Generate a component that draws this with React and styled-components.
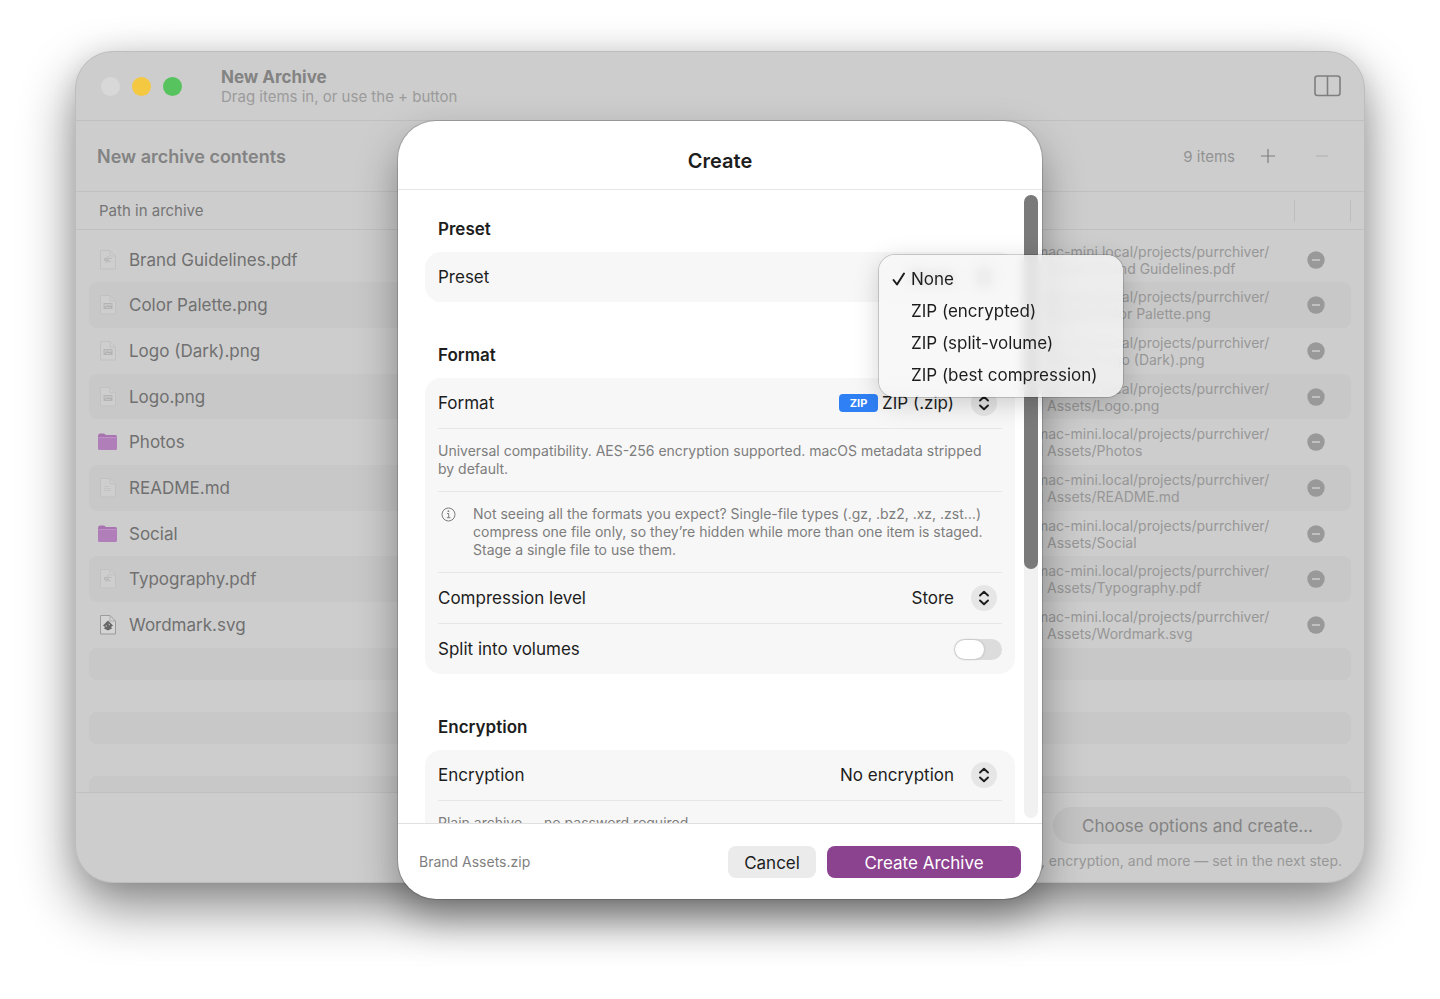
import React, { useState } from 'react';
import styled, { createGlobalStyle } from 'styled-components';

const GlobalStyle = createGlobalStyle`
    * {
        box-sizing: border-box;
    }
    body {
        margin: 0;
        background: #fff;
        font-family: Inter, "Liberation Sans", sans-serif;
        font-size: 17px;
        color: #1d1d1d;
    }
    button, select, input {
        font: inherit;
        color: inherit;
        margin: 0;
    }
    h1, h2, h3, p {
        margin: 0;
    }
`;

const Page = styled.main`
    display: flex;
    min-height: 100vh;
    padding: 51px 75px 116px;
    overflow: hidden;
`;

const Window = styled.section`
    position: relative;
    display: flex;
    flex-direction: column;
    flex: 1;
    min-width: 0;
    border: 1px solid #bdbdbd;
    border-radius: 38px;
    background: #cdcdcd;
    box-shadow: 0 24px 54px rgba(0, 0, 0, 0.48), 0 0 26px rgba(0, 0, 0, 0.08);
`;

const TitleBar = styled.header`
    display: flex;
    align-items: center;
    height: 69px;
    padding: 0 23px 0 25px;
    border-bottom: 1px solid #c0c0c0;
`;

const Lights = styled.div`
    display: flex;
    gap: 12px;
    margin-right: 39px;
`;

const Light = styled.button`
    width: 19px;
    height: 19px;
    padding: 0;
    border: 0;
    border-radius: 50%;
    background: ${({ $color }) => $color};
`;

const Titles = styled.div`
    flex: 1;
    padding-top: 2px;
`;

const WindowTitle = styled.h1`
    font-size: 17px;
    line-height: 20px;
    font-weight: 700;
    color: #838383;
`;

const Subtitle = styled.p`
    font-size: 15px;
    line-height: 20px;
    color: #9b9b9b;
`;

const PlainButton = styled.button`
    display: flex;
    padding: 0;
    border: 0;
    background: none;
    color: ${({ $color }) => $color || '#7f7f7f'};
`;

const ContentsBar = styled.div`
    display: flex;
    align-items: center;
    height: 71px;
    padding: 0 35px 0 21px;
    border-bottom: 1px solid #c0c0c0;
`;

const ContentsTitle = styled.h2`
    flex: 1;
    font-size: 18px;
    font-weight: 600;
    color: #838383;
`;

const Count = styled.span`
    margin-right: 26px;
    font-size: 15px;
    color: #929292;
`;

const ContentsActions = styled.div`
    display: flex;
    gap: 40px;
`;

const TableArea = styled.div`
    flex: 1 1 0;
    min-height: 0;
    overflow: hidden;
`;

const Table = styled.table`
    display: block;
`;

const TableHead = styled.thead`
    display: block;
    padding: 0 13px;
    border-bottom: 1px solid #c0c0c0;
`;

const HeadRow = styled.tr`
    display: flex;
    align-items: center;
    height: 37px;
`;

const HeadCell = styled.th`
    flex: ${({ $width }) => ($width ? `0 0 ${$width}` : 1)};
    height: ${({ $divided }) => ($divided ? '22px' : 'auto')};
    padding: 0 10px;
    border-right: ${({ $divided }) => ($divided ? '1px solid #bdbdbd' : 0)};
    font-size: 15px;
    font-weight: 400;
    text-align: left;
    color: #757575;
`;

const TableBody = styled.tbody`
    display: block;
    padding: 7px 13px 0;
`;

const Row = styled.tr`
    display: flex;
    align-items: center;
    height: 46px;
    border-radius: 8px;

    &:nth-child(3n + 1) {
        height: 45px;
    }
    &:nth-child(even) {
        background: #c8c8c8;
    }
`;

const NameCell = styled.td`
    display: flex;
    align-items: center;
    flex: 1;
    gap: 11px;
    padding: 0 8px;
    color: #707070;
`;

const SourceCell = styled.td`
    flex: 0 0 291px;
    padding: 0;
    font-size: 14px;
    line-height: 17px;
    color: #979797;
`;

const ActionCell = styled.td`
    display: flex;
    flex: 0 0 56px;
    padding: 0 0 0 12px;
`;

const Filler = styled.div`
    margin: 0 13px;
`;

const FillerRow = styled.div`
    height: 32px;
    border-radius: 8px;

    &:nth-child(odd) {
        background: #c8c8c8;
    }
`;

const WindowFooter = styled.footer`
    display: flex;
    flex-direction: column;
    align-items: flex-end;
    gap: 8px;
    height: 90px;
    padding: 14px 22px 0;
    border-top: 1px solid #c0c0c0;
`;

const OptionsButton = styled.button`
    height: 37px;
    padding: 1px 29px 0;
    border: 0;
    border-radius: 19px;
    background: #c4c4c4;
    color: #838383;
`;

const Hint = styled.p`
    font-size: 14px;
    line-height: 18px;
    color: #989898;
`;

const Overlay = styled.div`
    position: absolute;
    inset: 0;
    display: flex;
    justify-content: center;
    align-items: flex-start;
    padding-top: 69px;
`;

const Dialog = styled.div`
    position: relative;
    display: flex;
    flex-direction: column;
    width: 644px;
    height: calc(100vh - 221px);
    border-radius: 38px;
    background: #fff;
    box-shadow: 0 0 0 1px rgba(0, 0, 0, 0.16), 0 20px 42px rgba(0, 0, 0, 0.36);
`;

const DialogHeader = styled.header`
    display: flex;
    align-items: center;
    justify-content: center;
    height: 69px;
    padding-top: 12px;
    border-bottom: 1px solid #e6e6e6;
`;

const DialogTitle = styled.h2`
    font-size: 20px;
    font-weight: 600;
`;

const DialogBody = styled.div`
    display: flex;
    flex: 1;
    gap: 9px;
    min-height: 0;
    padding: 0 4px 0 27px;
`;

const Form = styled.form`
    display: flex;
    flex: 1;
    flex-direction: column;
    gap: 42px;
    padding-top: 28px;
    overflow-y: auto;
    scrollbar-width: none;
`;

const ScrollTrack = styled.div`
    width: 14px;
    margin: 5px 0;
    border-radius: 7px;
    background: #f1f1f1;
`;

const ScrollThumb = styled.div`
    height: 60%;
    border-radius: 7px;
    background: #7a7a7a;
`;

const SectionTitle = styled.h3`
    margin-bottom: 12px;
    padding: 0 13px;
    font-size: 17px;
    line-height: 22px;
    font-weight: 600;
`;

const Card = styled.div`
    padding: 0 13px;
    border-radius: 16px;
    background: #f7f7f7;
`;

const CardRow = styled.div`
    display: flex;
    align-items: center;
    justify-content: space-between;
    min-height: 51px;
    border-bottom: 1px solid #e6e6e6;

    &:last-child {
        min-height: 50px;
        border-bottom: 0;
    }
`;

const Note = styled(CardRow)`
    align-items: flex-start;
    justify-content: flex-start;
    padding: 13px 14px 13px ${({ $icon }) => ($icon ? '3px' : 0)};
    gap: 17px;
    font-size: 14px;
    line-height: 18px;
    color: #7d7d7d;

    svg {
        flex: none;
        margin-top: 2px;
    }
`;

const Picker = styled.div`
    display: flex;
    align-items: center;
    gap: 4px;
    padding-right: 5px;
`;

const Select = styled.select`
    appearance: none;
    field-sizing: content;
    height: 26px;
    padding: 0;
    border: 0;
    background: none;
`;

const Stepper = styled.span`
    display: flex;
    align-items: center;
    justify-content: center;
    width: 26px;
    height: 26px;
    margin-left: 13px;
    border-radius: 50%;
    background: #e6e6e6;
    pointer-events: none;
`;

const Badge = styled.span`
    width: 39px;
    border-radius: 4px;
    background: #2f80f5;
    color: #fff;
    font-size: 11px;
    line-height: 18px;
    font-weight: 700;
    text-align: center;
`;

const Toggle = styled.input`
    appearance: none;
    display: flex;
    align-items: center;
    width: 48px;
    height: 21px;
    padding: 0 1px;
    border-radius: 11px;
    background: #dcdcdc;

    &::before {
        content: '';
        width: 29px;
        height: 19px;
        border-radius: 10px;
        background: #fff;
        box-shadow: 0 0 3px rgba(0, 0, 0, 0.2);
    }
    &:checked {
        justify-content: flex-end;
        background: #8b428f;
    }
`;

const DialogFooter = styled.footer`
    display: flex;
    align-items: center;
    gap: 11px;
    height: 76px;
    padding: 0 21px;
    border-top: 1px solid #e0e0e0;
`;

const FileName = styled.span`
    flex: 1;
    font-size: 14px;
    color: #7f7f7f;
`;

const Button = styled.button`
    width: ${({ $primary }) => ($primary ? '194px' : '88px')};
    height: 32px;
    padding: 2px 0 0;
    border: 0;
    border-radius: 8px;
    background: ${({ $primary }) => ($primary ? '#8b428f' : '#ebebeb')};
    color: ${({ $primary }) => ($primary ? '#fff' : '#1d1d1d')};
`;

const Menu = styled.div`
    position: absolute;
    top: 134px;
    left: 481px;
    width: 244px;
    padding: 8px 0 6px;
    border-radius: 16px;
    background: rgba(246, 246, 246, 0.8);
    backdrop-filter: blur(6px);
    box-shadow: 0 0 0 1px rgba(0, 0, 0, 0.16), 0 6px 26px rgba(0, 0, 0, 0.18);
`;

const MenuItem = styled.button`
    display: flex;
    align-items: center;
    width: 100%;
    height: 32px;
    padding: 0 13px;
    border: 0;
    background: none;
    white-space: nowrap;
`;

const CheckSlot = styled.span`
    display: flex;
    width: 19px;
`;

const files = [
    { name: 'Brand Guidelines.pdf', kind: 'pdf' },
    { name: 'Color Palette.png', kind: 'image' },
    { name: 'Logo (Dark).png', kind: 'image' },
    { name: 'Logo.png', kind: 'image' },
    { name: 'Photos', kind: 'folder' },
    { name: 'README.md', kind: 'text' },
    { name: 'Social', kind: 'folder' },
    { name: 'Typography.pdf', kind: 'pdf' },
    { name: 'Wordmark.svg', kind: 'vector' },
];

const presets = ['None', 'ZIP (encrypted)', 'ZIP (split-volume)', 'ZIP (best compression)'];

const FileIcon = ({ kind }) => {
    if (kind === 'folder') {
        return (
            <svg width="21" height="20" viewBox="0 0 21 20">
                <path d="M1 4Q1 1.500 3 1.500h4l2 1.500h9.500Q20 3 20 5v2H1z" fill="#a874b0" />
                <rect x="1" y="5" width="19" height="13" rx="1.500" fill="#b07fba" />
                <path d="M1.500 5.500h18" stroke="#c08fc8" strokeWidth="1" />
            </svg>
        );
    }
    const vector = kind === 'vector';
    return (
        <svg width="21" height="20" viewBox="0 0 21 20" fill="none">
            <path
                d="M3.500 .5h9.500l5.500 5.500v13h-15z"
                fill={vector ? '#d4d4d4' : '#cecece'}
                stroke={vector ? '#9c9c9c' : '#c1c1c1'}
                strokeLinejoin="round"
            />
            <path d="M13 .5v5.500h5.500" stroke={vector ? '#aaa' : '#c1c1c1'} />
            {vector && (
                <>
                    <path d="M11 5.500l5 5-2 1.500 1 1.500-4 2-4-2 1-1.500-2-1.500z" fill="#666" />
                    <path d="M8.500 11H10M11.500 9l1.500 1" stroke="#c8c8c8" />
                </>
            )}
            {kind === 'image' && (
                <>
                    <rect x="7" y="8.500" width="8" height="5" fill="#c6c6c6" stroke="#b4b4b4" />
                    <path d="M7.500 13l2.500-2.500 2 1.500 1.500-1 1.500 2" stroke="#a8a8a8" />
                </>
            )}
            {kind === 'pdf' && (
                <path d="M7.500 8.500h2.500v2H7.500zM12 8.500h2.500M11 6v5M8.500 12.500l2.500-1.500 2.500 1" stroke="#b5b5b5" />
            )}
            {kind === 'text' && <path d="M7 8.500h5M7 10.500h7M7 12.500h7" stroke="#c3c3c3" />}
        </svg>
    );
};

const ColumnsIcon = () => (
    <svg width="27" height="22" viewBox="0 0 27 22" fill="none" stroke="currentColor" strokeWidth="1.600">
        <rect x="1" y="1" width="25" height="19.500" rx="2.500" />
        <path d="M13.500 1v19.500" />
    </svg>
);

const PlusIcon = () => (
    <svg width="14" height="14" viewBox="0 0 14 14" fill="none" stroke="currentColor" strokeWidth="1.200">
        <path d="M7 0v14M0 7h14" />
    </svg>
);

const MinusIcon = () => (
    <svg width="14" height="14" viewBox="0 0 14 14" fill="none" stroke="currentColor" strokeWidth="1.200">
        <path d="M1 7h12" />
    </svg>
);

const RemoveIcon = () => (
    <svg width="18" height="18" viewBox="0 0 18 18">
        <circle cx="9" cy="9" r="8.700" fill="#999" />
        <path d="M5 9h8" stroke="#d2d2d2" strokeWidth="1.400" />
    </svg>
);

const InfoIcon = () => (
    <svg width="15" height="15" viewBox="0 0 15 15" fill="none" stroke="currentColor">
        <circle cx="7.500" cy="7.500" r="6.500" />
        <path d="M6 6.500h1.700v4M5.800 10.700h3.600" />
        <circle cx="7.400" cy="4.200" r=".9" fill="currentColor" stroke="none" />
    </svg>
);

const StepperIcon = () => (
    <svg width="12" height="16" viewBox="0 0 12 16" fill="none" stroke="#1d1d1d" strokeWidth="1.900" strokeLinecap="round" strokeLinejoin="round">
        <path d="M2 5.500l4-3.800 4 3.800M2 10.500l4 3.800 4-3.800" />
    </svg>
);

const CheckIcon = () => (
    <svg width="14" height="14" viewBox="0 0 14 14" fill="none" stroke="currentColor" strokeWidth="2" strokeLinecap="round" strokeLinejoin="round">
        <path d="M1.500 8l3.500 4.500L12 1.500" />
    </svg>
);

const PickerRow = ({ id, label, value, badge }) => (
    <CardRow>
        <label htmlFor={id}>{label}</label>
        <Picker>
            {badge && <Badge>{badge}</Badge>}
            <Select id={id} defaultValue={value}>
                <option>{value}</option>
            </Select>
            <Stepper><StepperIcon /></Stepper>
        </Picker>
    </CardRow>
);

const ArchiveTable = () => (
    <TableArea>
        <Table>
            <TableHead>
                <HeadRow>
                    <HeadCell>Path in archive</HeadCell>
                    <HeadCell $width="291px" $divided aria-label="Source" />
                    <HeadCell $width="56px" $divided aria-label="Actions" />
                </HeadRow>
            </TableHead>
            <TableBody>
                {files.map(({ name, kind }) => (
                    <Row key={name}>
                        <NameCell><FileIcon kind={kind} />{name}</NameCell>
                        <SourceCell>
                            ftp://mac-mini.local/projects/purrchiver/<br />
                            Brand Assets/{name}
                        </SourceCell>
                        <ActionCell>
                            <PlainButton type="button" aria-label={`Remove ${name}`}><RemoveIcon /></PlainButton>
                        </ActionCell>
                    </Row>
                ))}
            </TableBody>
        </Table>
        <Filler>
            {[1, 2, 3, 4, 5].map((n) => <FillerRow key={n} />)}
        </Filler>
    </TableArea>
);

const CreateDialog = () => {
    const [preset, setPreset] = useState('None');

    return (
        <Dialog role="dialog" aria-labelledby="create-title">
            <DialogHeader>
                <DialogTitle id="create-title">Create</DialogTitle>
            </DialogHeader>
            <DialogBody>
                <Form>
                    <section>
                        <SectionTitle>Preset</SectionTitle>
                        <Card>
                            <PickerRow key={preset} id="preset" label="Preset" value={preset} />
                        </Card>
                    </section>
                    <section>
                        <SectionTitle>Format</SectionTitle>
                        <Card>
                            <PickerRow id="format" label="Format" value="ZIP (.zip)" badge="ZIP" />
                            <Note>
                                Universal compatibility. AES-256 encryption supported. macOS metadata stripped by default.
                            </Note>
                            <Note $icon>
                                <InfoIcon />
                                <span>
                                    Not seeing all the formats you expect? Single-file types (.gz, .bz2, .xz, .zst…)
                                    compress one file only, so they’re hidden while more than one item is staged.
                                    Stage a single file to use them.
                                </span>
                            </Note>
                            <PickerRow id="level" label="Compression level" value="Store" />
                            <CardRow>
                                <label htmlFor="split">Split into volumes</label>
                                <Toggle id="split" type="checkbox" role="switch" />
                            </CardRow>
                        </Card>
                    </section>
                    <section>
                        <SectionTitle>Encryption</SectionTitle>
                        <Card>
                            <PickerRow id="encryption" label="Encryption" value="No encryption" />
                            <Note>Plain archive — no password required.</Note>
                        </Card>
                    </section>
                </Form>
                <ScrollTrack><ScrollThumb /></ScrollTrack>
            </DialogBody>
            <DialogFooter>
                <FileName>Brand Assets.zip</FileName>
                <Button type="button">Cancel</Button>
                <Button type="button" $primary>Create Archive</Button>
            </DialogFooter>
            <Menu role="menu" aria-label="Preset">
                {presets.map((item) => (
                    <MenuItem
                        key={item}
                        type="button"
                        role="menuitemradio"
                        aria-checked={item === preset}
                        onClick={() => setPreset(item)}
                    >
                        <CheckSlot>{item === preset && <CheckIcon />}</CheckSlot>
                        {item}
                    </MenuItem>
                ))}
            </Menu>
        </Dialog>
    );
};

const App = () => (
    <Page>
        <GlobalStyle />
        <Window>
            <TitleBar>
                <Lights>
                    <Light $color="#d8d8d8" aria-label="Close" />
                    <Light $color="#f5c842" aria-label="Minimize" />
                    <Light $color="#57c35f" aria-label="Zoom" />
                </Lights>
                <Titles>
                    <WindowTitle>New Archive</WindowTitle>
                    <Subtitle>Drag items in, or use the + button</Subtitle>
                </Titles>
                <PlainButton aria-label="Toggle inspector"><ColumnsIcon /></PlainButton>
            </TitleBar>
            <ContentsBar>
                <ContentsTitle>New archive contents</ContentsTitle>
                <Count>9 items</Count>
                <ContentsActions>
                    <PlainButton aria-label="Add items"><PlusIcon /></PlainButton>
                    <PlainButton $color="#b4b4b4" aria-label="Remove items"><MinusIcon /></PlainButton>
                </ContentsActions>
            </ContentsBar>
            <ArchiveTable />
            <WindowFooter>
                <OptionsButton>Choose options and create…</OptionsButton>
                <Hint>Format, encryption, and more — set in the next step.</Hint>
            </WindowFooter>
            <Overlay>
                <CreateDialog />
            </Overlay>
        </Window>
    </Page>
);

export default App;
